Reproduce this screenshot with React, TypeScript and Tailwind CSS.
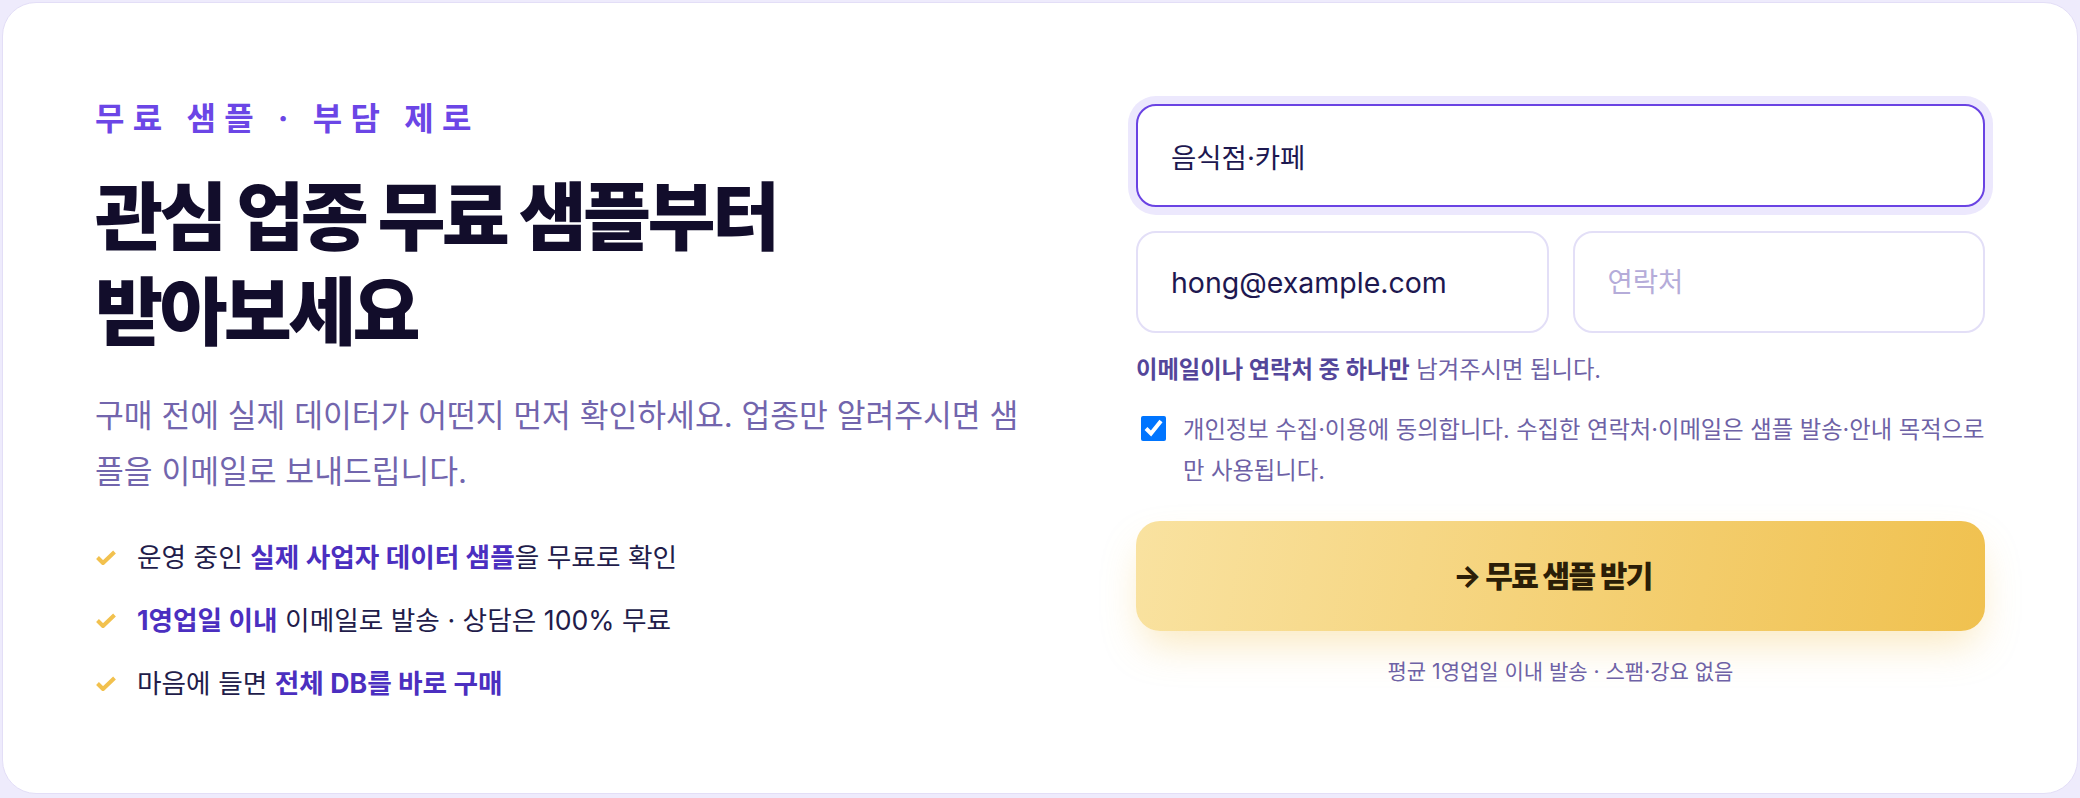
import React from "react";

const Check = () => (
  <svg viewBox="0 0 22 17" className="h-[17px] w-[22px] shrink-0" fill="none">
    <path d="M2.5 8.5l5.5 5.5L19.5 3" stroke="#f2c14e" strokeWidth="4" strokeLinejoin="round" />
  </svg>
);

const App = () => {
  const bullets = [
    { pre: "운영 중인 ", bold: "실제 사업자 데이터 샘플", post: "을 무료로 확인" },
    { pre: "", bold: "1영업일 이내", post: " 이메일로 발송 · 상담은 100% 무료" },
    { pre: "마음에 들면 ", bold: "전체 DB를 바로 구매", post: "" },
  ];

  return (
    <div className="h-[798px] bg-[#eeebfc] p-[2px] pb-[4px] [font-family:Inter,'Noto_Sans_CJK_KR',sans-serif]">
      <div className="h-full rounded-[34px] border border-[#e3def7] bg-white px-[92px] pt-[98px]">
        <div className="grid grid-cols-[1fr_849px] items-start gap-[96px]">
          {/* Left */}
          <div>
            <p className="text-[32px] font-bold leading-[36px] tracking-[0.26em] text-[#6b46e6]">
              무료 샘플 · 부담 제로
            </p>
            <h1 className="mt-[33px] text-[74px] font-extrabold leading-[95px] tracking-[-0.05em] text-[#120d2b]">
              관심 업종 무료 샘플부터
              <br />
              받아보세요
            </h1>
            <p className="mt-[28px] max-w-[935px] text-[31.3px] leading-[56px] text-[#7265ad]">
              구매 전에 실제 데이터가 어떤지 먼저 확인하세요. 업종만 알려주시면 샘플을 이메일로 보내드립니다.
            </p>
            <ul className="mt-[37px] flex flex-col gap-[23px]">
              {bullets.map((b) => (
                <li key={b.bold} className="flex items-center gap-[20px] text-[26.7px] leading-[40px] text-[#221c4a]">
                  <Check />
                  <span>
                    {b.pre}
                    <b className="font-bold text-[#4b2fc0]">{b.bold}</b>
                    {b.post}
                  </span>
                </li>
              ))}
            </ul>
          </div>

          {/* Right — form */}
          <div className="mt-[3px] flex flex-col">
            <input
              readOnly
              defaultValue="음식점·카페"
              className="h-[103px] w-full rounded-[20px] border-2 border-[#6a43e3] bg-white px-[33px] text-[27.5px] text-[#1d1850] outline-none ring-8 ring-[#ece8fd]"
            />
            <div className="mt-[24px] grid grid-cols-2 gap-[24px]">
              <input
                readOnly
                defaultValue="hong@example.com"
                className="h-[102px] w-full rounded-[20px] border-2 border-[#e3dff7] bg-white px-[33px] text-[28.5px] text-[#1d1850] outline-none"
              />
              <input
                readOnly
                placeholder="연락처"
                className="h-[102px] w-full rounded-[20px] border-2 border-[#e3dff7] bg-white px-[33px] text-[27.5px] text-[#1d1850] outline-none placeholder:text-[#b5acd9]"
              />
            </div>
            <p className="mt-[21px] text-[23.3px] leading-[32px] text-[#6e62a6]">
              <b className="font-bold text-[#54469a]">이메일이나 연락처 중 하나만</b> 남겨주시면 됩니다.
            </p>
            <label className="mt-[23px] flex items-start gap-[17px]">
              <input type="checkbox" defaultChecked className="m-0 ml-[5px] mt-[7px] h-[25px] w-[25px] shrink-0" />
              <span className="text-[23.3px] leading-[41px] text-[#6e62a6]">
                개인정보 수집·이용에 동의합니다. 수집한 연락처·이메일은 샘플 발송·안내 목적으로만 사용됩니다.
              </span>
            </label>
            <button className="mt-[30px] h-[110px] w-full rounded-[24px] bg-linear-[100deg] from-[#f9e2a0] to-[#f0c14f] pr-[16px] text-[30px] font-extrabold tracking-[-0.05em] text-[#2b1e07] shadow-[0_20px_40px_-8px_rgba(240,190,70,0.35)]">
              → 무료 샘플 받기
            </button>
            <p className="mt-[26px] text-center text-[21px] leading-[30px] text-[#6e62a6]">
              평균 1영업일 이내 발송 · 스팸·강요 없음
            </p>
          </div>
        </div>
      </div>
    </div>
  );
};

export default App;
